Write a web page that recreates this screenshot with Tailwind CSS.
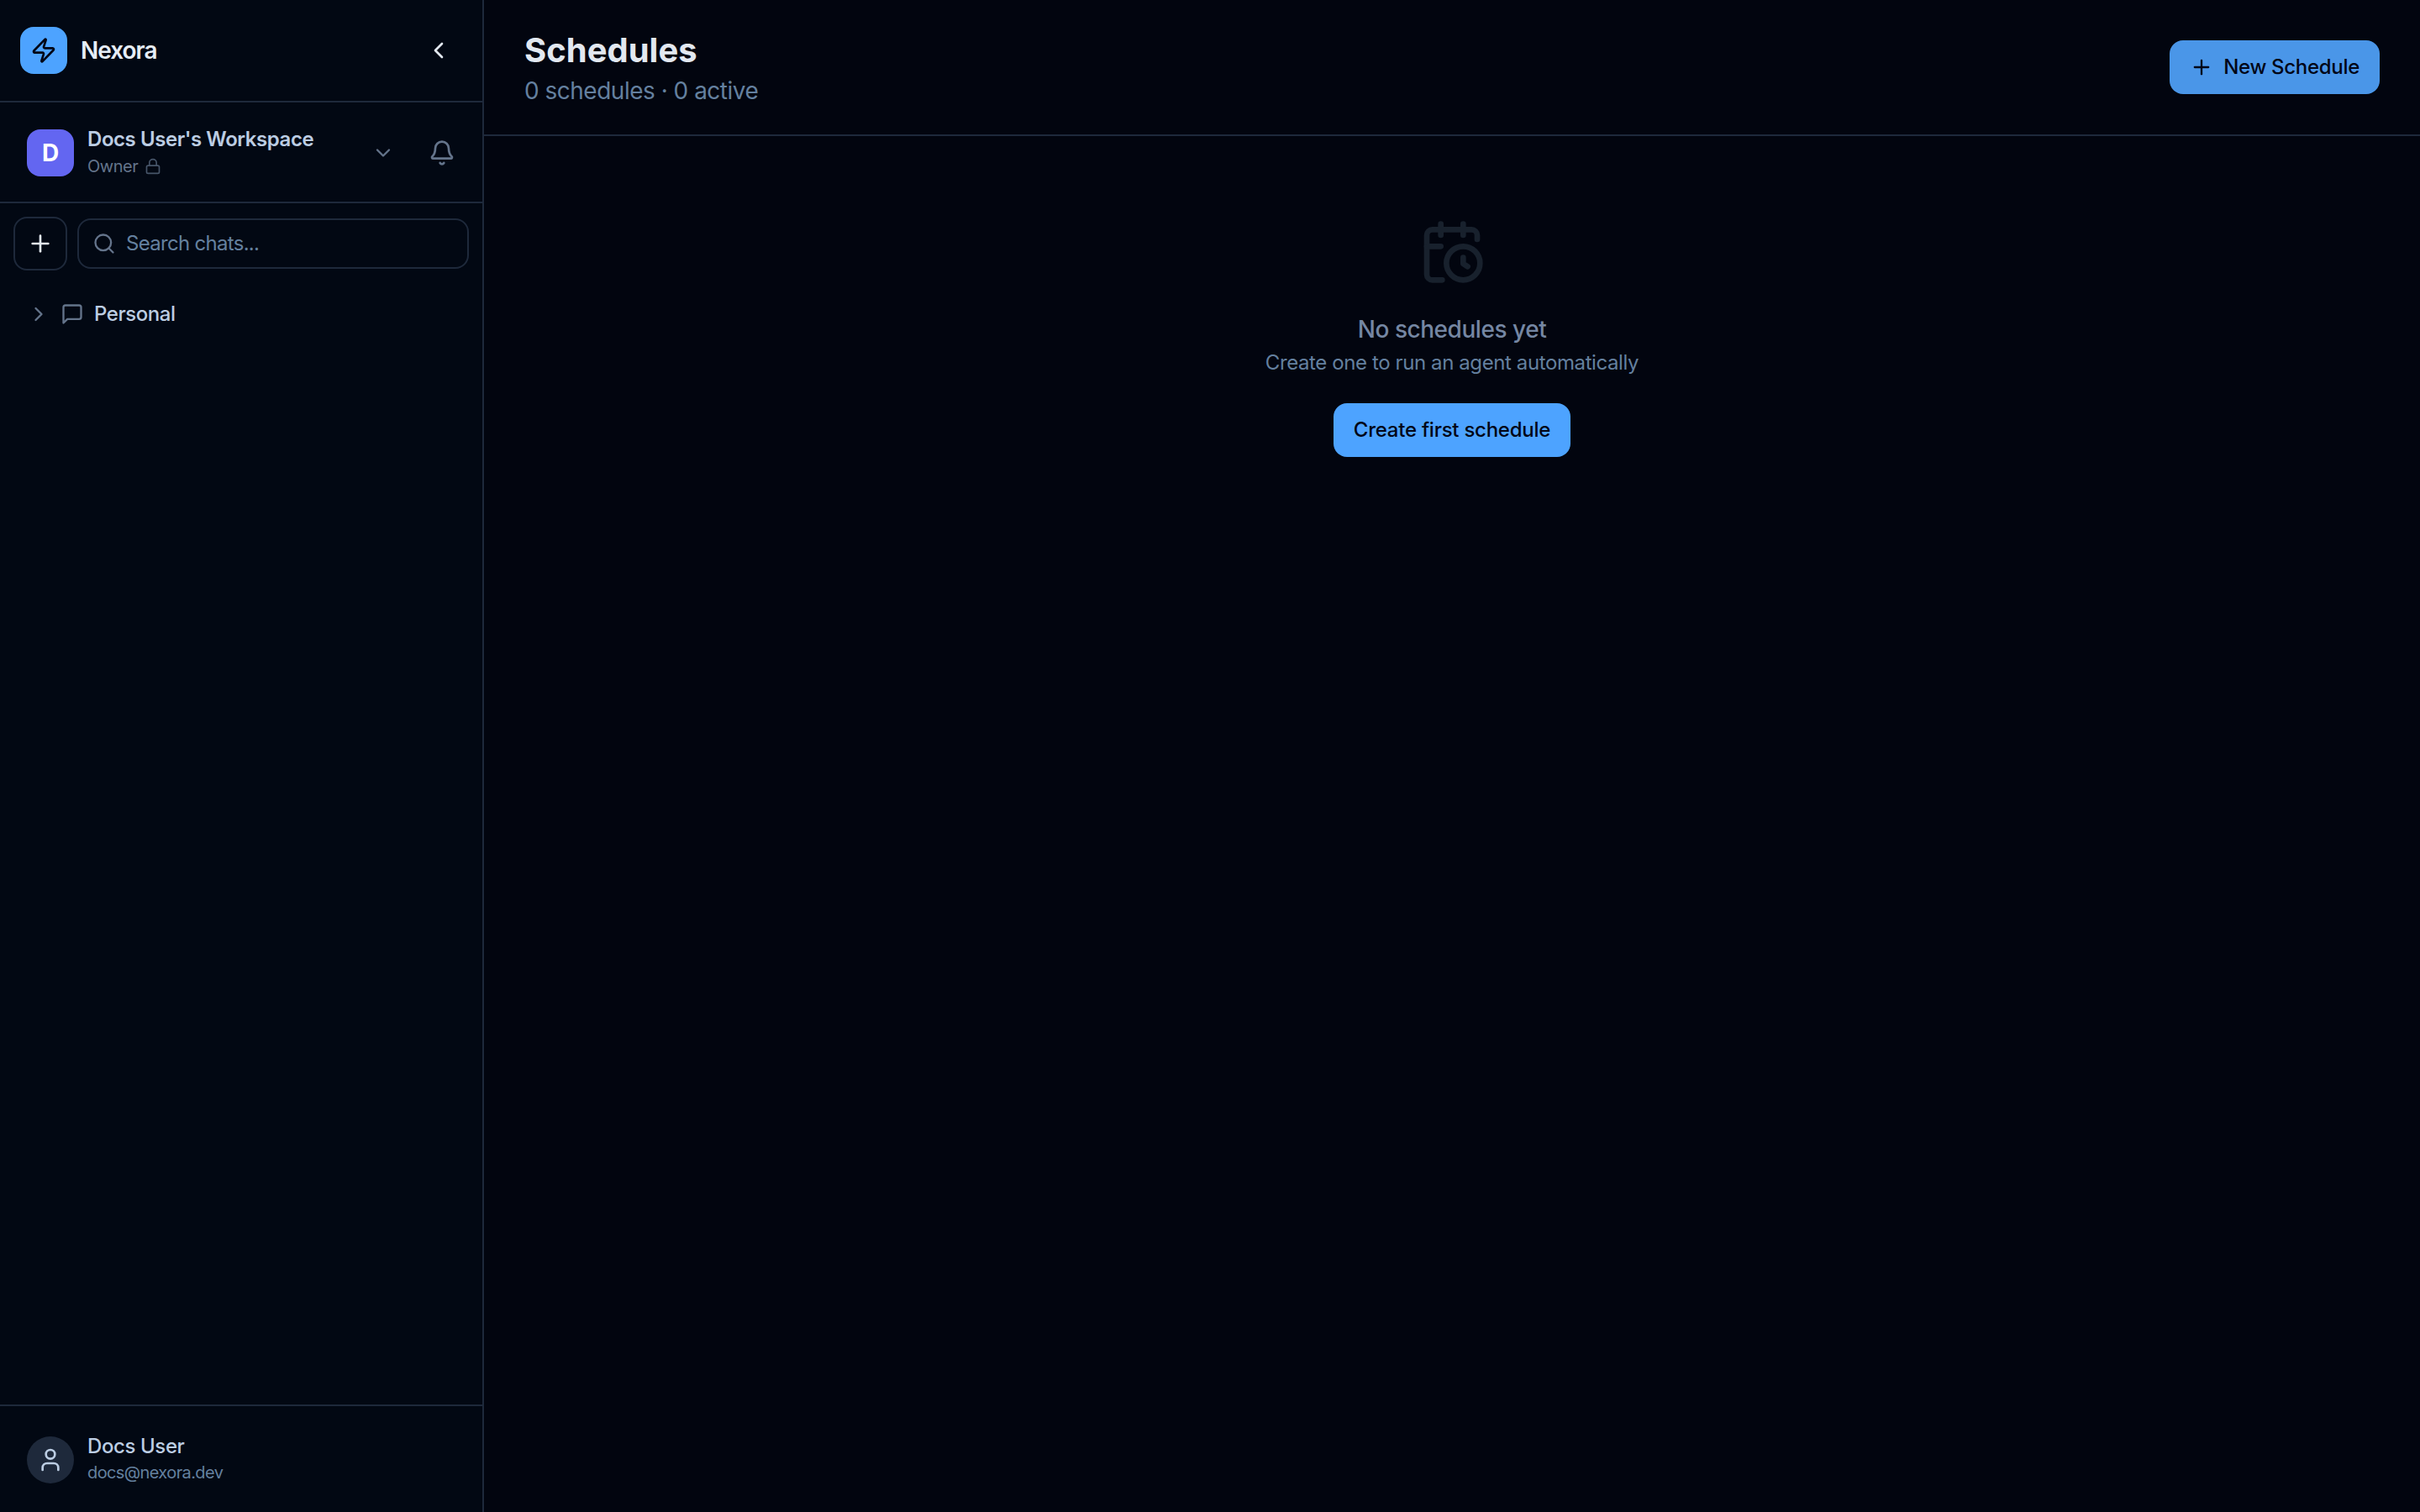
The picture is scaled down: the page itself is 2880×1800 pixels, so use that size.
<!DOCTYPE html>
<html>
<head>
<meta charset="utf-8">
<title>Schedules</title>
<script src="https://cdn.jsdelivr.net/npm/@tailwindcss/browser@4"></script>
</head>
<body class="m-0 bg-[#02050f] font-['Inter',sans-serif]">
<div class="flex h-[1800px] w-[2880px] overflow-hidden">
  <aside class="flex h-full w-[576px] shrink-0 flex-col border-r-2 border-[#1e293b] bg-[#020813]">
    <div class="flex h-[122px] items-center justify-between border-b-2 border-[#1e293b] pl-[24px] pr-[36px]">
      <div class="flex items-center gap-[16px]">
        <div class="flex h-[56px] w-[56px] items-center justify-center rounded-[16px] bg-[#4da3ff]">
          <svg class="h-[32px] w-[32px]" viewBox="0 0 24 24" fill="none" stroke="#020617" stroke-width="2" stroke-linecap="round" stroke-linejoin="round"><path d="M4 14a1 1 0 0 1-.78-1.63l9.9-10.2a.5.5 0 0 1 .86.46l-1.92 6.02A1 1 0 0 0 13 10h7a1 1 0 0 1 .78 1.63l-9.9 10.2a.5.5 0 0 1-.86-.46l1.92-6.02A1 1 0 0 0 11 14z"/></svg>
        </div>
        <span class="text-[28px] leading-[36px] font-semibold tracking-[-1px] text-[#e6edf5]">Nexora</span>
      </div>
      <svg class="h-[32px] w-[32px]" viewBox="0 0 24 24" fill="none" stroke="#e2e8f0" stroke-width="2" stroke-linecap="round" stroke-linejoin="round"><path d="m15 18-6-6 6-6"/></svg>
    </div>
    <div class="flex h-[120px] items-center border-b-2 border-[#1e293b] pl-[32px] pr-[32px] pt-[2px]">
      <div class="flex h-[56px] w-[56px] items-center justify-center rounded-[16px] bg-[#6366f1] text-[28px] font-bold text-white">D</div>
      <div class="ml-[16px] flex flex-1 flex-col pb-[4px]">
        <span class="text-[24px] leading-[32px] font-semibold tracking-[-0.44px] text-[#bccde3]">Docs User's Workspace</span>
        <span class="mt-[3px] flex items-center gap-[8px] text-[20px] leading-[26px] tracking-[-0.5px] text-[#64748b]">Owner
          <svg class="h-[20px] w-[20px]" viewBox="0 0 24 24" fill="none" stroke="#475569" stroke-width="2" stroke-linecap="round" stroke-linejoin="round"><rect x="3" y="11" width="18" height="11" rx="2"/><path d="M7 11V7a5 5 0 0 1 10 0v4"/></svg>
        </span>
      </div>
      <svg class="h-[28px] w-[28px]" viewBox="0 0 24 24" fill="none" stroke="#64748b" stroke-width="2" stroke-linecap="round" stroke-linejoin="round"><path d="m6 9 6 6 6-6"/></svg>
      <svg class="ml-[40px] h-[32px] w-[32px]" viewBox="0 0 24 24" fill="none" stroke="#64748b" stroke-width="2" stroke-linecap="round" stroke-linejoin="round"><path d="M10.268 21a2 2 0 0 0 3.464 0"/><path d="M3.262 15.326A1 1 0 0 0 4 17h16a1 1 0 0 0 .74-1.673C19.41 13.956 18 12.499 18 8A6 6 0 0 0 6 8c0 4.499-1.411 5.956-2.738 7.326"/></svg>
    </div>
    <div class="flex items-center gap-[12px] px-[16px] pt-[16px]">
      <div class="flex h-[64px] w-[64px] shrink-0 items-center justify-center rounded-[16px] border-2 border-[#1e293b]">
        <svg class="h-[32px] w-[32px]" viewBox="0 0 24 24" fill="none" stroke="#e2e8f0" stroke-width="2" stroke-linecap="round" stroke-linejoin="round"><path d="M5 12h14"/><path d="M12 5v14"/></svg>
      </div>
      <div class="flex h-[60px] flex-1 items-center gap-[12px] rounded-[16px] border-2 border-[#1e293b] pl-[16px]">
        <svg class="h-[28px] w-[28px] shrink-0" viewBox="0 0 24 24" fill="none" stroke="#64748b" stroke-width="2" stroke-linecap="round" stroke-linejoin="round"><circle cx="11" cy="11" r="8"/><path d="m21 21-4.3-4.3"/></svg>
        <span class="text-[24px] leading-[32px] tracking-[-0.7px] text-[#64809f]">Search chats...</span>
      </div>
    </div>
    <div class="mt-[24px] flex h-[56px] items-center gap-[12px] pl-[32px]">
      <svg class="h-[28px] w-[28px]" viewBox="0 0 24 24" fill="none" stroke="#64748b" stroke-width="2" stroke-linecap="round" stroke-linejoin="round"><path d="m9 18 6-6-6-6"/></svg>
      <svg class="h-[28px] w-[28px]" viewBox="0 0 24 24" fill="none" stroke="#64748b" stroke-width="2" stroke-linecap="round" stroke-linejoin="round"><path d="M21 15a2 2 0 0 1-2 2H7l-4 4V5a2 2 0 0 1 2-2h14a2 2 0 0 1 2 2z"/></svg>
      <span class="text-[24px] leading-[32px] font-medium tracking-[-0.45px] text-[#bccde3]">Personal</span>
    </div>
    <div class="mt-auto flex h-[128px] items-start gap-[16px] border-t-2 border-[#1e293b] pl-[32px] pt-[36px]">
      <div class="flex h-[56px] w-[56px] items-center justify-center rounded-full bg-[#1e293b]">
        <svg class="h-[32px] w-[32px]" viewBox="0 0 24 24" fill="none" stroke="#bccde3" stroke-width="2" stroke-linecap="round" stroke-linejoin="round"><path d="M19 21v-2a4 4 0 0 0-4-4H9a4 4 0 0 0-4 4v2"/><circle cx="12" cy="7" r="4"/></svg>
      </div>
      <div class="-mt-[2px] flex flex-col">
        <span class="text-[24px] leading-[28px] font-medium tracking-[-0.4px] text-[#bccde3]">Docs User</span>
        <span class="mt-[4px] text-[20px] leading-[26px] tracking-[-0.6px] text-[#64809f]">docs@nexora.dev</span>
      </div>
    </div>
  </aside>
  <main class="flex h-full flex-1 flex-col">
    <header class="flex h-[162px] items-start justify-between border-b-2 border-[#1e293b] pl-[48px] pr-[48px] pt-[36px]">
      <div class="flex flex-col">
        <h1 class="text-[40px] leading-[48px] font-bold text-[#e2e8f0]">Schedules</h1>
        <p class="mt-[6px] text-[28px] leading-[36px] tracking-[-0.5px] text-[#64809f]">0 schedules · 0 active</p>
      </div>
      <button class="mt-[12px] flex h-[64px] items-center gap-[12px] rounded-[16px] bg-[#4a96e8] px-[24px] text-[24px] font-medium tracking-[-0.3px] text-[#020617]">
        <svg class="h-[28px] w-[28px]" viewBox="0 0 24 24" fill="none" stroke="#020617" stroke-width="2" stroke-linecap="round" stroke-linejoin="round"><path d="M5 12h14"/><path d="M12 5v14"/></svg>
        New Schedule
      </button>
    </header>
    <div class="flex flex-col items-center pt-[98px]">
      <svg class="h-[80px] w-[80px]" viewBox="0 0 24 24" fill="none" stroke="#18212d" stroke-width="2" stroke-linecap="round" stroke-linejoin="round"><path d="M16 14v2.2l1.6 1"/><path d="M16 2v4"/><path d="M21 7.5V6a2 2 0 0 0-2-2H5a2 2 0 0 0-2 2v14a2 2 0 0 0 2 2h3.5"/><path d="M3 10h5"/><path d="M8 2v4"/><circle cx="16" cy="16" r="6"/></svg>
      <p class="mt-[34px] text-[28px] leading-[36px] font-medium tracking-[-0.45px] text-[#7587a3]">No schedules yet</p>
      <p class="mt-[6px] text-[24px] leading-[32px] tracking-[-0.4px] text-[#64809f]">Create one to run an agent automatically</p>
      <button class="mt-[32px] flex h-[64px] items-center rounded-[16px] bg-[#4da3ff] px-[24px] text-[24px] font-medium tracking-[-0.25px] text-[#020617]">Create first schedule</button>
    </div>
  </main>
</div>
</body>
</html>
